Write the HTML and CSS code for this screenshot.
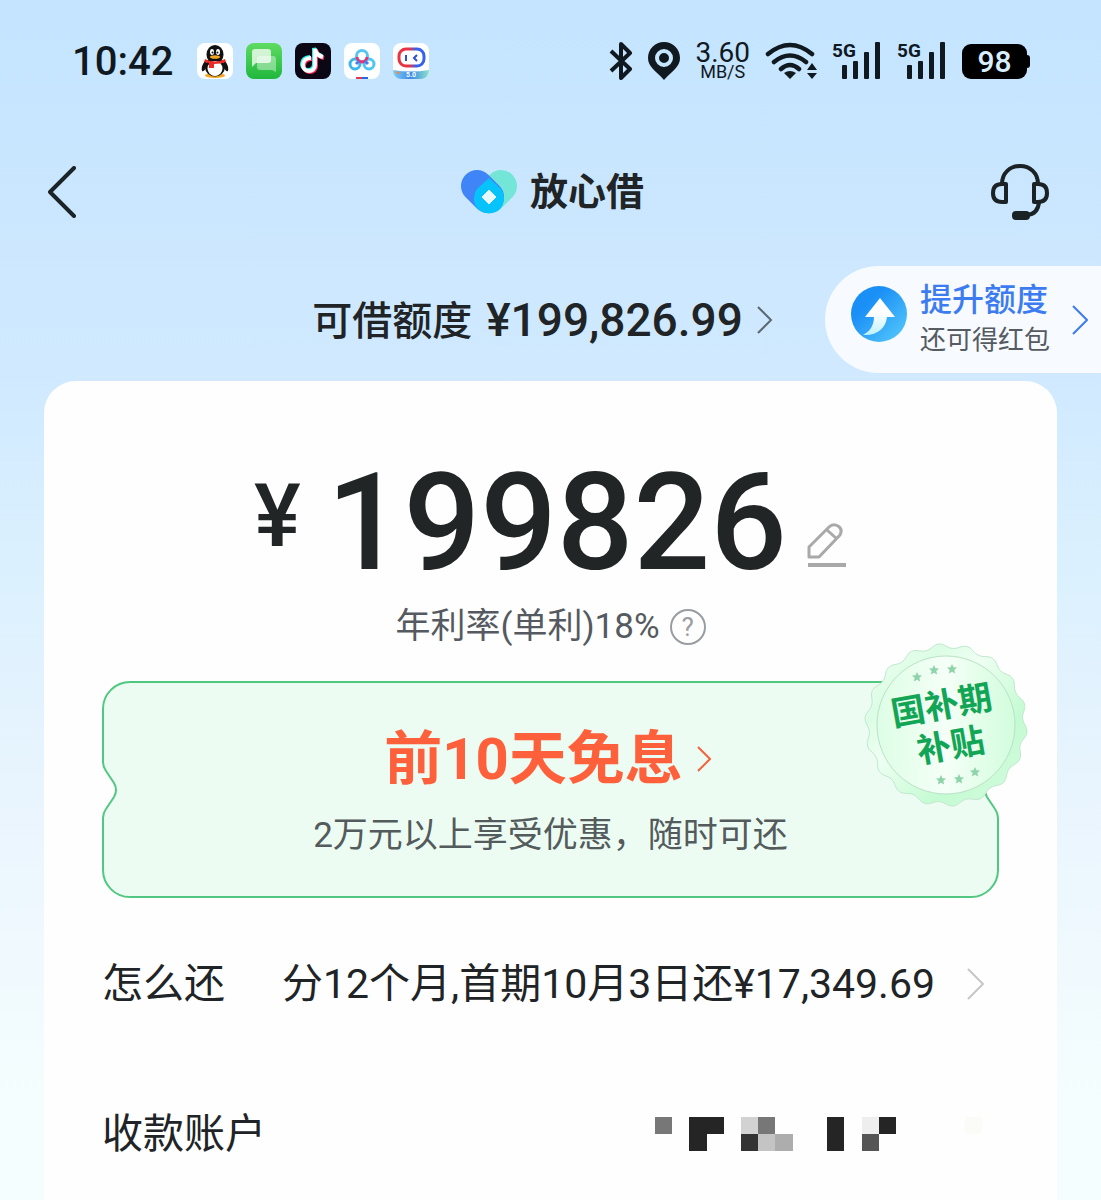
FILE: index.html
```html
<!DOCTYPE html>
<html lang="zh-CN">
<head>
    <meta charset="UTF-8">
    <meta name="viewport" content="width=device-width, initial-scale=1.0">
    <title>放心借</title>
    <link rel="stylesheet" href="styles.css">
</head>
<body>
    <div class="status-bar">
        <span class="time">10:42</span>
        <div class="app-icons">
            <svg class="app-icon" viewBox="0 0 36 36">
                <rect width="36" height="36" rx="8" fill="#fff"/>
                <ellipse cx="18" cy="32.5" rx="10" ry="2.4" fill="#f5a623"/>
                <path d="M9 17C6 20 4 24 5 28c1 1 3-1 4-3zM27 17c3 3 5 7 4 11-1 1-3-1-4-3z" fill="#111"/>
                <ellipse cx="18" cy="24" rx="10" ry="9.5" fill="#111"/>
                <ellipse cx="18" cy="11.500" rx="8.500" ry="9.500" fill="#111"/>
                <ellipse cx="18" cy="25.500" rx="7.500" ry="7.500" fill="#fff"/>
                <ellipse cx="15" cy="9" rx="2" ry="3" fill="#fff"/>
                <ellipse cx="21" cy="9" rx="2" ry="3" fill="#fff"/>
                <circle cx="15.500" cy="9.500" r="1" fill="#111"/>
                <circle cx="20.500" cy="9.500" r="1" fill="#111"/>
                <ellipse cx="18" cy="14" rx="5" ry="1.800" fill="#f5a623"/>
                <path d="M8 16q10 5 20 0l1 3q-5 2-12 2v4h-5v-5l-5-1z" fill="#ec2a2a"/>
            </svg>
            <svg class="app-icon" viewBox="0 0 36 36">
                <defs>
                    <linearGradient id="msg" x1="0" y1="0" x2="0" y2="1">
                        <stop offset="0" stop-color="#5fdb62"/>
                        <stop offset="1" stop-color="#1fb83d"/>
                    </linearGradient>
                </defs>
                <rect width="36" height="36" rx="8" fill="url(#msg)"/>
                <path d="M14 13h13q3 0 3 3v13l-4-2H14q-3 0-3-3v-8q0-3 3-3z" fill="#fff" opacity=".4"/>
                <path d="M9 6h13q3 0 3 3v8q0 3-3 3H10l-4 4V9q0-3 3-3z" fill="#fff" opacity=".75"/>
            </svg>
            <svg class="app-icon" viewBox="0 0 36 36">
                <rect width="36" height="36" rx="8" fill="#0b0714"/>
                <g fill="none" stroke-width="4">
                    <path d="M16 15c-5 0-8 3-8 7s3 6 6 6 6-2 6-6V6c1 5 4 7 8 8" stroke="#25f4ee" transform="translate(-1 -1)"/>
                    <path d="M16 15c-5 0-8 3-8 7s3 6 6 6 6-2 6-6V6c1 5 4 7 8 8" stroke="#fe2c55" transform="translate(1 1)"/>
                    <path d="M16 15c-5 0-8 3-8 7s3 6 6 6 6-2 6-6V6c1 5 4 7 8 8" stroke="#fff"/>
                </g>
            </svg>
            <svg class="app-icon" viewBox="0 0 36 36">
                <rect width="36" height="36" rx="8" fill="#fff"/>
                <g fill="none" stroke-width="3">
                    <circle cx="11" cy="21" r="5" stroke="#39b8ee"/>
                    <circle cx="25" cy="21" r="5" stroke="#4cc6f2"/>
                    <circle cx="18" cy="13" r="5.500" stroke="#59c5ef"/>
                    <path d="M13 14a5 5 0 0 0 10 0" stroke="#f2306b"/>
                    <path d="M15 18l-3 3M21 18l3 3" stroke="#3f82ef"/>
                </g>
                <path d="M12 34h6v2h-6z" fill="#e83450"/>
                <path d="M18 34h6v2h-6z" fill="#2468e8"/>
            </svg>
            <svg class="app-icon" viewBox="0 0 36 36">
                <defs>
                    <linearGradient id="bot"><stop offset=".4" stop-color="#ea3342"/><stop offset=".7" stop-color="#3362ed"/></linearGradient>
                    <linearGradient id="sea"><stop offset="0" stop-color="#7fcbf2"/><stop offset=".5" stop-color="#3c8ce8"/><stop offset="1" stop-color="#8de2c9"/></linearGradient>
                    <clipPath id="tile"><rect width="36" height="36" rx="8"/></clipPath>
                </defs>
                <g clip-path="url(#tile)">
                    <rect width="36" height="36" fill="#fff"/>
                    <path d="M0 27q18 3 36 0v9H0z" fill="url(#sea)"/>
                    <path d="M2 28l6 2-4 1z" fill="#ef8c45"/>
                    <rect x="6" y="6" width="25" height="17" rx="7" fill="none" stroke="url(#bot)" stroke-width="3"/>
                    <path d="M13 12v6M24 12l-3 3 3 3" fill="none" stroke="#2d50ce" stroke-width="2"/>
                    <text class="icon-version" x="18" y="34" text-anchor="middle">5.0</text>
                </g>
            </svg>
        </div>
        <div class="system-icons">
            <svg width="24" height="38" viewBox="0 0 24 38" fill="none" stroke="#10191f" stroke-width="4" stroke-linejoin="round">
                <path d="M2 9l19 18-9 9V2l9 9L2 29"/>
            </svg>
            <svg width="32" height="38" viewBox="0 0 32 38">
                <path d="M16 0C7 0 0 7 0 16c0 9 8 13 16 22 8-9 16-13 16-22C32 7 25 0 16 0z" fill="#10191f"/>
                <circle cx="16" cy="16" r="7" fill="#10191f" stroke="#c6e6ff" stroke-width="4"/>
            </svg>
            <div class="speed"><span class="speed-value">3.60</span><span class="speed-unit">MB/S</span></div>
            <svg width="52" height="38" viewBox="0 0 52 38">
                <g fill="none" stroke="#10191f" stroke-width="4.500" stroke-linecap="round">
                    <path d="M3 12q22-18 44 0M9 20q16-13 32 0M16 27q9-8 18 0"/>
                </g>
                <path d="M19 31q6-4 12 0l-6 6z" fill="#10191f"/>
                <path d="M42 28l5-7 5 7zM42 31h10l-5 6z" fill="#10191f"/>
            </svg>
            <svg width="50" height="46" viewBox="0 -4 50 46" fill="#10191f">
                <text class="network" x="0" y="15">5G</text>
                <rect x="10" y="23" width="5" height="14" rx="1"/>
                <rect x="21" y="19" width="5" height="18" rx="1"/>
                <rect x="32" y="10" width="5" height="27" rx="1"/>
                <rect x="43" y="0" width="5" height="37" rx="1"/>
            </svg>
            <svg width="50" height="46" viewBox="0 -4 50 46" fill="#10191f">
                <text class="network" x="0" y="15">5G</text>
                <rect x="10" y="23" width="5" height="14" rx="1"/>
                <rect x="21" y="19" width="5" height="18" rx="1"/>
                <rect x="32" y="10" width="5" height="27" rx="1"/>
                <rect x="43" y="0" width="5" height="37" rx="1"/>
            </svg>
            <span class="battery">98</span>
        </div>
    </div>

    <header class="nav">
        <button class="icon-btn back" aria-label="返回">
            <svg width="28" height="52" viewBox="0 0 28 52" fill="none" stroke="#1c2326" stroke-width="4" stroke-linecap="round" stroke-linejoin="round">
                <path d="M26 2L2 26l24 24"/>
            </svg>
        </button>
        <div class="brand">
            <svg width="56" height="44" viewBox="0 0 56 44">
                <path d="M40 16L29 27" stroke="#74e6d7" stroke-width="32" stroke-linecap="round"/>
                <path d="M16 16l11 11" stroke="#3f85f8" stroke-width="32" stroke-linecap="round"/>
                <path d="M28 8l12 11a16 16 0 0 1-1 20 16 16 0 0 1-22 0 16 16 0 0 1-1-20z" fill="#06c3fb"/>
                <path d="M28 20l7 7-7 7-7-7z" fill="#e6f9ff" stroke="#e6f9ff" stroke-linejoin="round"/>
            </svg>
            <h1>放心借</h1>
        </div>
        <button class="icon-btn service" aria-label="客服">
            <svg width="58" height="56" viewBox="0 0 58 56" fill="none" stroke="#1b2225" stroke-width="4">
                <path d="M11 20C11 9 19 2 29 2s18 7 18 18"/>
                <path d="M15 20v18h-4q-9 0-9-9t9-9z" stroke-linejoin="round"/>
                <path d="M43 20v18h4q9 0 9-9t-9-9z" stroke-linejoin="round"/>
                <path d="M48 38q-1 12-12 13"/>
                <rect x="22" y="48" width="16" height="7" rx="3" fill="#1b2225" stroke-width="2"/>
            </svg>
        </button>
    </header>

    <section class="limit">
        <a class="limit-total" href="#">
            <span class="limit-label">可借额度</span>
            <span class="limit-value">¥199,826.99</span>
            <svg width="16" height="28" viewBox="0 0 16 28" fill="none" stroke="#5c6973" stroke-width="2">
                <path d="M1 1l13 13L1 27"/>
            </svg>
        </a>
        <a class="raise" href="#">
            <svg class="raise-icon" width="56" height="56" viewBox="0 0 56 56">
                <defs>
                    <linearGradient id="ball" x1="0" y1="0" x2="1" y2="1">
                        <stop offset=".3" stop-color="#1a8ff6"/>
                        <stop offset="1" stop-color="#58ccfb"/>
                    </linearGradient>
                    <linearGradient id="arrow" x1="0" y1="0" x2="0" y2="1">
                        <stop offset=".4" stop-color="#fff"/>
                        <stop offset="1" stop-color="#bff2fb"/>
                    </linearGradient>
                </defs>
                <circle cx="28" cy="28" r="28" fill="url(#ball)"/>
                <path d="M29 12l15 19h-8c-1 11-10 19-24 18 8-4 11-11 11-18h-9z" fill="url(#arrow)"/>
            </svg>
            <span class="raise-text">
                <span class="raise-title">提升额度</span>
                <span class="raise-sub">还可得红包</span>
            </span>
            <svg width="16" height="30" viewBox="0 0 16 30" fill="none" stroke="#3d7cf0" stroke-width="2">
                <path d="M1 1l14 14L1 29"/>
            </svg>
        </a>
    </section>

    <main class="card">
        <div class="amount">
            <span class="currency">¥</span>
            <span class="amount-value">199826</span>
            <button class="icon-btn edit" aria-label="修改金额">
                <svg width="40" height="44" viewBox="0 0 40 44" fill="none" stroke="#a9a9a9" stroke-width="3" stroke-linejoin="round">
                    <path d="M2 34V24L22 4q4-4 9-1t2 9L12 34zM20 7l10 9"/>
                    <path d="M1 42h38" stroke-width="4"/>
                </svg>
            </button>
        </div>
        <div class="rate">
            <span>年利率(单利)18%</span>
            <button class="help" aria-label="利率说明">?</button>
        </div>

        <section class="ticket">
            <a class="ticket-title" href="#">
                <span>前10天免息</span>
                <svg width="14" height="26" viewBox="0 0 14 26" fill="none" stroke="#f5623f" stroke-width="2">
                    <path d="M1 1l12 12L1 25"/>
                </svg>
            </a>
            <p class="ticket-sub">2万元以上享受优惠，随时可还</p>
            <svg class="notch notch-left" width="16" height="56" viewBox="0 0 16 56">
                <path d="M0 0h1q0 5 3 9l8 12q4 7 0 14L4 47q-3 4-3 9H0z" fill="#fefefe"/>
                <path d="M1 0q0 5 3 9l8 12q4 7 0 14L4 47q-3 4-3 9" fill="none" stroke="#50c881" stroke-width="2"/>
            </svg>
            <svg class="notch notch-right" width="16" height="56" viewBox="0 0 16 56">
                <path d="M16 0h-1q0 5-3 9L4 21q-4 7 0 14l8 12q3 4 3 9h1z" fill="#fefefe"/>
                <path d="M15 0q0 5-3 9L4 21q-4 7 0 14l8 12q3 4 3 9" fill="none" stroke="#50c881" stroke-width="2"/>
            </svg>
            <svg class="seal" width="168" height="168" viewBox="-84 -84 168 168">
                <defs>
                    <linearGradient id="sealEdge" x1="0" y1="0" x2="1" y2="1">
                        <stop offset="0" stop-color="#f0fff4"/>
                        <stop offset=".25" stop-color="#dcfde5"/>
                        <stop offset=".4" stop-color="#effff3"/>
                        <stop offset=".7" stop-color="#c4fbd2"/>
                        <stop offset="1" stop-color="#d8fbe2"/>
                    </linearGradient>
                    <linearGradient id="sealFace" x1="0" y1="0" x2="1" y2="0">
                        <stop offset="0" stop-color="#ddfee6"/>
                        <stop offset=".5" stop-color="#f5fff7"/>
                        <stop offset="1" stop-color="#d2fddc"/>
                    </linearGradient>
                    <path id="star" d="M0-5l1.500 3.300 3.500.3-2.700 2.300.9 3.600L0 2.700l-3.200 1.800.9-3.600L-5-1.400l3.500-.3z"/>
                </defs>
                <path fill="url(#sealEdge)" stroke="#c0e8cd" d="M79 0Q83.700 7.300 77.800 13.700Q72.400 19.400 74.200 27Q76.100 35.500 68.400 39.500Q61.400 43 60.500 50.800Q59.400 59.400 50.800 60.500Q43 61.400 39.500 68.400Q35.500 76.100 27 74.200Q19.400 72.400 13.700 77.800Q7.300 83.700 0 79Q-6.500 74.700-13.700 77.800Q-21.700 81.100-27 74.200Q-31.700 68-39.500 68.400Q-48.200 68.800-50.800 60.500Q-53 53-60.500 50.800Q-68.800 48.200-68.400 39.500Q-68 31.700-74.200 27Q-81.100 21.700-77.800 13.700Q-74.700 6.500-79 0Q-83.700-7.300-77.800-13.700Q-72.400-19.400-74.200-27Q-76.100-35.500-68.400-39.500Q-61.400-43-60.500-50.800Q-59.400-59.400-50.800-60.500Q-43-61.400-39.500-68.400Q-35.500-76.100-27-74.200Q-19.400-72.400-13.700-77.800Q-7.300-83.700 0-79Q6.500-74.700 13.700-77.800Q21.700-81.100 27-74.200Q31.700-68 39.500-68.400Q48.200-68.800 50.800-60.500Q53-53 60.500-50.800Q68.800-48.200 68.400-39.500Q68-31.700 74.200-27Q81.100-21.700 77.800-13.700Q74.700-6.500 79 0z"/>
                <circle r="69" fill="url(#sealFace)" stroke="#b9e2c7"/>
                <g fill="#8fd3aa">
                    <use href="#star" x="-29" y="-48"/>
                    <use href="#star" x="-12" y="-55"/>
                    <use href="#star" x="6" y="-56"/>
                    <use href="#star" x="-5" y="55"/>
                    <use href="#star" x="13" y="54"/>
                    <use href="#star" x="29" y="47"/>
                </g>
                <g class="seal-text" transform="rotate(-10)" text-anchor="middle">
                    <text x="-1" y="-8">国补期</text>
                    <text x="1" y="33">补贴</text>
                </g>
            </svg>
        </section>

        <div class="rows">
            <a class="row" href="#">
                <span class="row-label">怎么还</span>
                <span class="row-value">分12个月,首期10月3日还¥17,349.69</span>
                <svg width="18" height="32" viewBox="0 0 18 32" fill="none" stroke="#c6c6c6" stroke-width="2">
                    <path d="M1 1l15 15L1 31"/>
                </svg>
            </a>
            <a class="row" href="#">
                <span class="row-label">收款账户</span>
                <!-- masked account number -->
                <svg class="mask" width="327" height="34" viewBox="0 0 19 2" preserveAspectRatio="none" shape-rendering="crispEdges">
                    <path d="M2 0h2v1H3v1H2zM10 0h1v2h-1zM13 0h1v1h-1z" fill="#252525"/>
                    <path d="M0 0h1v1H0zM6 0h1v1H6z" fill="#777"/>
                    <path d="M5 0h1v1H5z" fill="#d2d2d2"/>
                    <path d="M5 1h1v1H5z" fill="#333"/>
                    <path d="M6 1h1v1H6z" fill="#c4c4c4"/>
                    <path d="M7 1h1v1H7z" fill="#adadad"/>
                    <path d="M12 0h1v1h-1z" fill="#eee"/>
                    <path d="M12 1h1v1h-1z" fill="#555"/>
                    <path d="M18 0h1v1h-1z" fill="#fbfbf8"/>
                </svg>
            </a>
        </div>
    </main>
</body>
</html>
```

FILE: styles.css
```css
* {
    margin: 0;
    padding: 0;
    box-sizing: border-box;
}

body {
    display: flex;
    flex-direction: column;
    min-height: 100vh;
    background: linear-gradient(#c4e4ff, #d0e9ff 31%, #daf0fe 46%, #eaf5fe 68%, #f5fefe 92%);
    color: #202426;
    font-family: Roboto, "Noto Sans CJK SC", sans-serif;
    overflow-x: hidden;
}

a {
    color: inherit;
    text-decoration: none;
}

svg {
    display: block;
    flex-shrink: 0;
}

.icon-btn {
    background: none;
    border: none;
    cursor: pointer;
}

/* status bar */
.status-bar {
    display: flex;
    align-items: center;
    height: 122px;
    padding: 0 72px;
    color: #10191f;
}

.time {
    margin-right: 24px;
    font-size: 40px;
    font-weight: 500;
}

.app-icons {
    display: flex;
    gap: 13px;
}

.app-icon {
    width: 36px;
    height: 36px;
}

.icon-version {
    font-size: 7px;
    font-weight: 700;
    fill: #fff;
}

.system-icons {
    display: flex;
    align-items: center;
    gap: 15px;
    margin-left: auto;
}

.speed {
    display: flex;
    flex-direction: column;
    align-items: center;
}

.speed-value {
    font-size: 28px;
    line-height: 22px;
}

.speed-unit {
    font-size: 18px;
    line-height: 16px;
}

.network {
    font-size: 19px;
    font-weight: 700;
}

.battery {
    position: relative;
    width: 65px;
    margin-right: 2px;
    border-radius: 9px;
    background: #000;
    color: #d9efff;
    font-size: 30px;
    font-weight: 500;
    line-height: 35px;
    text-align: center;
}

.battery::after {
    content: "";
    position: absolute;
    top: 11px;
    right: -3px;
    width: 4px;
    height: 13px;
    border-radius: 0 3px 3px 0;
    background: #000;
}

/* title bar */
.nav {
    display: grid;
    grid-template-columns: 1fr auto 1fr;
    align-items: center;
    height: 140px;
    padding: 0 52px 0 48px;
}

.back {
    justify-self: start;
}

.service {
    justify-self: end;
}

.brand {
    display: flex;
    align-items: center;
    gap: 13px;
    padding-left: 8px;
}

.brand h1 {
    font-size: 38px;
    font-weight: 700;
    line-height: 44px;
}

/* available limit */
.limit {
    display: grid;
    grid-template-columns: 1fr auto 1fr;
    align-items: center;
    margin: 4px 0 8px;
}

.limit-total {
    grid-column: 2;
    display: flex;
    align-items: center;
    gap: 14px;
    padding-right: 16px;
    font-weight: 500;
}

.limit-label {
    padding-bottom: 4px;
    font-size: 40px;
}

.limit-value {
    font-size: 46px;
}

.raise {
    justify-self: end;
    display: flex;
    align-items: center;
    height: 107px;
    padding: 0 13px 0 26px;
    border-radius: 54px 0 0 54px;
    background: #f7faff;
}

.raise-icon {
    margin: 0 13px 12px 0;
}

.raise-text {
    display: flex;
    flex-direction: column;
    margin-right: 22px;
}

.raise-title {
    color: #3d7cf0;
    font-size: 32px;
    font-weight: 500;
    line-height: 40px;
}

.raise-sub {
    color: #555b62;
    font-size: 26px;
    line-height: 40px;
}

/* main card */
.card {
    flex: 1;
    margin: 0 44px;
    padding: 74px 58px 36px;
    border-radius: 32px 32px 0 0;
    background: #fefefe;
}

.amount {
    display: flex;
    justify-content: center;
    align-items: center;
    color: #222525;
    font-weight: 500;
}

.currency {
    margin-right: 26px;
    padding-bottom: 14px;
    font-size: 88px;
    line-height: 122px;
}

.amount-value {
    font-size: 135px;
    line-height: 136px;
}

.edit {
    align-self: flex-end;
    margin: 0 0 24px 20px;
}

.rate {
    display: flex;
    justify-content: center;
    align-items: center;
    gap: 10px;
    margin-top: 14px;
    color: #555a60;
    font-size: 35px;
    line-height: 44px;
}

.help {
    width: 36px;
    height: 36px;
    border: 2px solid #999ca0;
    border-radius: 50%;
    background: none;
    color: #999ca0;
    font-family: inherit;
    font-size: 26px;
    line-height: 32px;
    text-align: center;
    cursor: pointer;
}

.ticket {
    position: relative;
    margin-top: 32px;
    padding: 41px 0 38px;
    border: 2px solid #50c881;
    border-radius: 28px;
    background: #edfcf2;
    text-align: center;
}

.ticket-title {
    display: flex;
    justify-content: center;
    align-items: center;
    gap: 14px;
    padding-right: 6px;
    color: #fd603b;
    font-size: 58px;
    font-weight: 700;
    line-height: 70px;
}

.ticket-sub {
    margin-top: 20px;
    color: #535b5c;
    font-size: 35px;
    line-height: 44px;
}

.notch {
    position: absolute;
    top: 50%;
    margin-top: -28px;
}

.notch-left {
    left: -2px;
}

.notch-right {
    right: -2px;
}

.seal {
    position: absolute;
    top: -42px;
    right: -33px;
}

.seal-text {
    fill: #12a556;
    font-size: 34px;
    font-weight: 700;
}

.rows {
    display: flex;
    flex-direction: column;
    gap: 90px;
    margin-top: 56px;
    padding-right: 14px;
}

.row {
    display: flex;
    align-items: center;
    font-size: 41px;
    line-height: 60px;
}

.row-label {
    min-width: 180px;
}

.row-value {
    flex: 1;
}

.mask {
    margin: 0 3px 0 auto;
}
```
